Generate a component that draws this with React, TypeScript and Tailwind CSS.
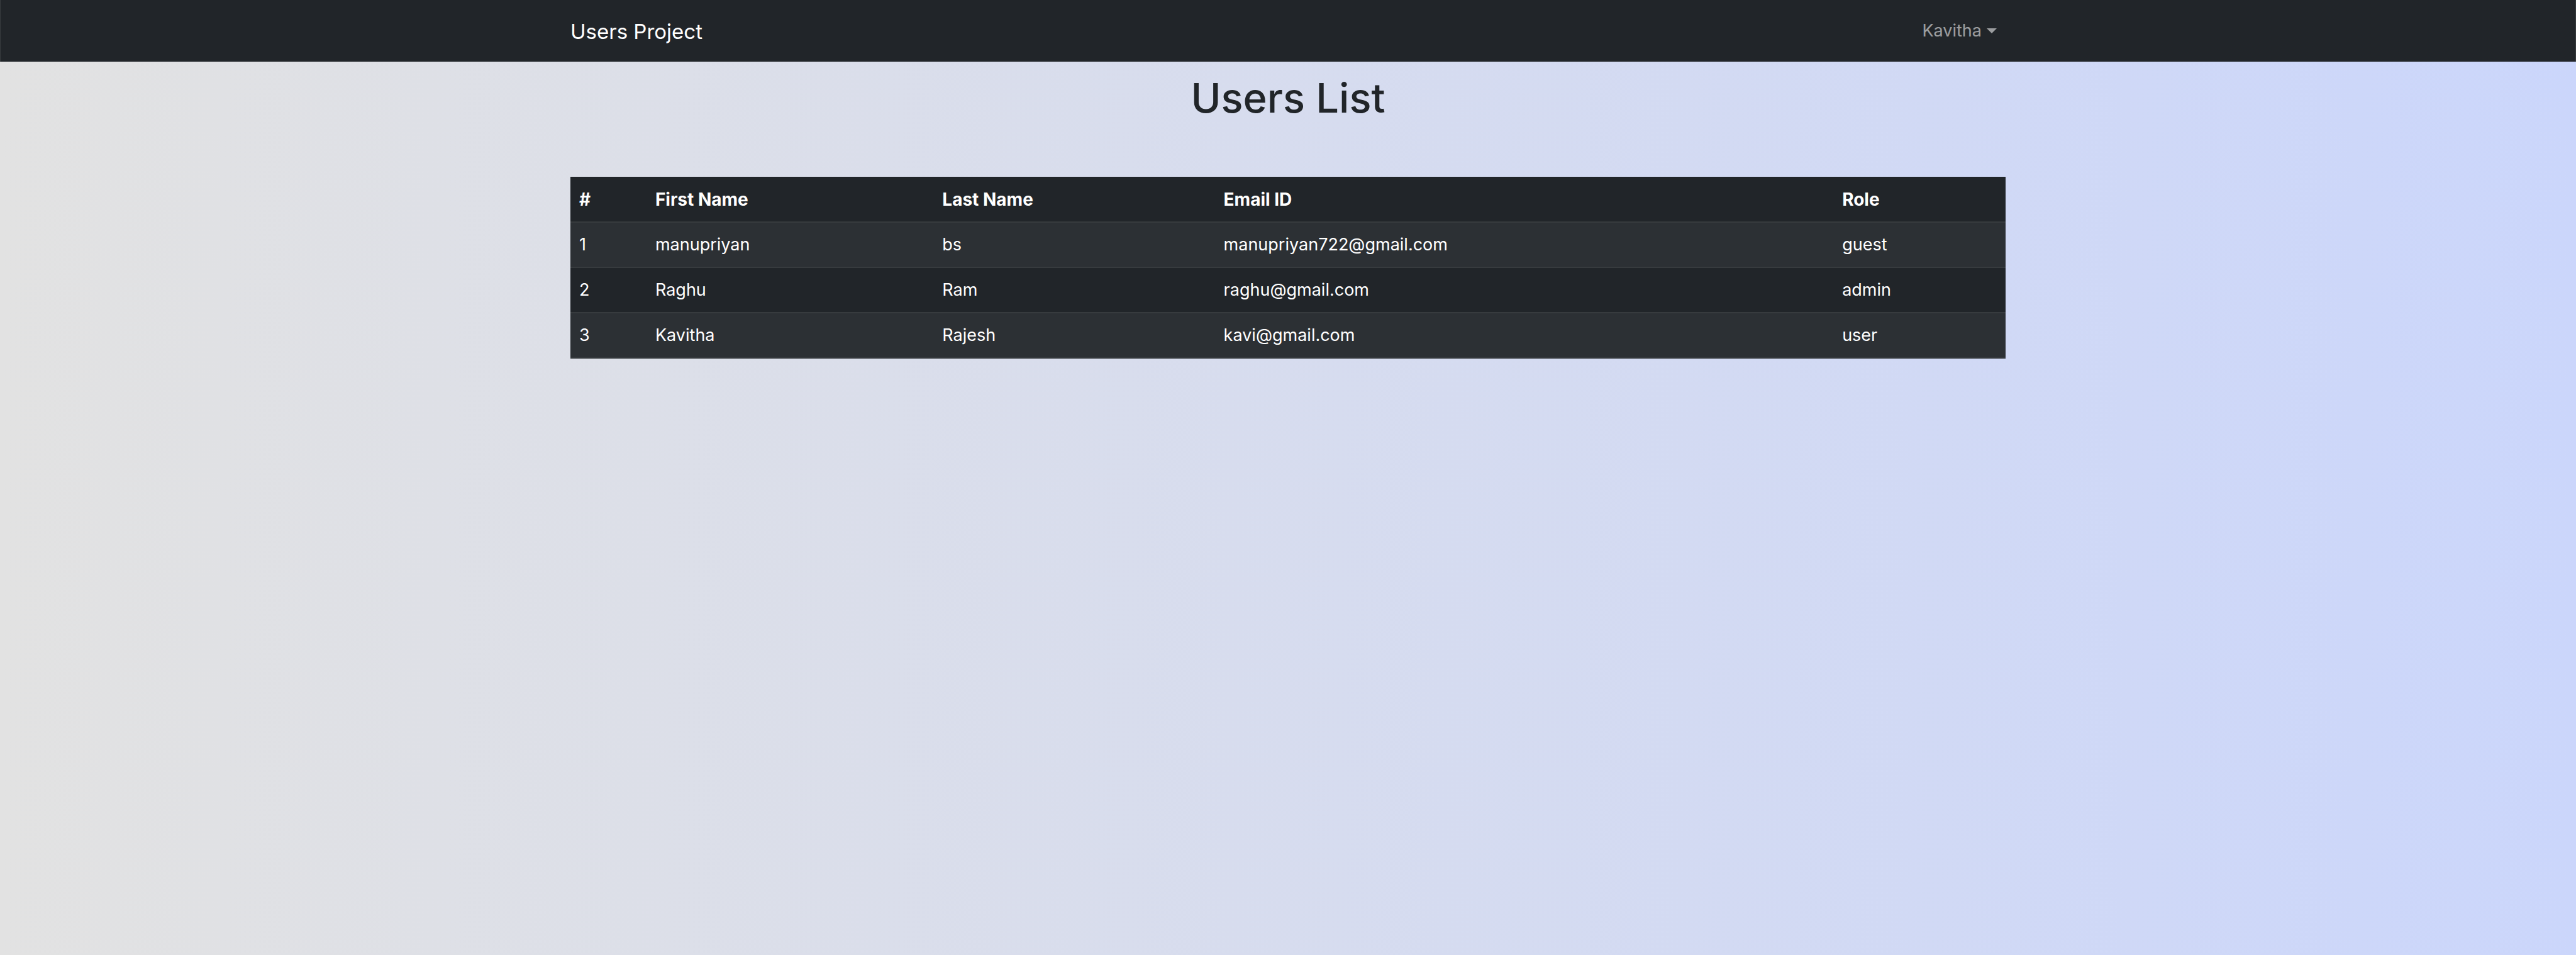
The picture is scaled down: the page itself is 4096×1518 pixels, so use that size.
type User = { id: number; first: string; last: string; email: string; role: string };

const users: User[] = [
  { id: 1, first: "manupriyan", last: "bs", email: "manupriyan722@gmail.com", role: "guest" },
  { id: 2, first: "Raghu", last: "Ram", email: "raghu@gmail.com", role: "admin" },
  { id: 3, first: "Kavitha", last: "Rajesh", email: "kavi@gmail.com", role: "user" },
];

const headings = ["#", "First Name", "Last Name", "Email ID", "Role"];

function Navbar() {
  return (
    <nav className="border-x border-[#373b3e] bg-[#212529]">
      <div className="mx-auto flex h-[98px] w-full max-w-[2282px] items-center justify-between">
        <a href="#" className="pt-0.5 text-[33px] leading-[52px] text-white">
          Users Project
        </a>
        <button type="button" className="flex items-center gap-2 px-[14px] text-[27px] leading-[42px] text-white/55">
          Kavitha
          <svg className="h-2 w-4" viewBox="0 0 16 8" fill="currentColor" aria-hidden="true">
            <path d="M0 0h16L8 8z" />
          </svg>
        </button>
      </div>
    </nav>
  );
}

function UsersTable() {
  return (
    <table className="w-full table-fixed border-collapse bg-[#212529] text-left text-[27px] leading-[42px] text-white">
      <colgroup>
        <col className="w-[5.3%]" />
        <col className="w-[20%]" />
        <col className="w-[19.6%]" />
        <col className="w-[43.1%]" />
        <col />
      </colgroup>
      <thead>
        <tr className="h-[72px] border-b-2 border-[#373b3e] text-[28px]">
          {headings.map((h) => (
            <th key={h} scope="col" className="px-[14px] font-bold">
              {h}
            </th>
          ))}
        </tr>
      </thead>
      <tbody>
        {users.map((u) => (
          <tr key={u.id} className="h-[72px] border-b-2 border-[#373b3e] odd:bg-[#2c3034]">
            <td className="px-[14px]">{u.id}</td>
            <td className="px-[14px]">{u.first}</td>
            <td className="px-[14px]">{u.last}</td>
            <td className="px-[14px]">{u.email}</td>
            <td className="px-[14px]">{u.role}</td>
          </tr>
        ))}
      </tbody>
    </table>
  );
}

export default function App() {
  return (
    <div className="min-h-screen bg-linear-to-r/srgb from-[#e2e2e2] to-[#cbd6fb] font-['Inter',sans-serif]">
      <Navbar />
      <main className="mx-auto w-full max-w-[2282px]">
        <h1 className="pt-4 pb-[83px] text-center text-[65px] leading-[84px] font-medium text-[#212529]">Users List</h1>
        <UsersTable />
      </main>
    </div>
  );
}
